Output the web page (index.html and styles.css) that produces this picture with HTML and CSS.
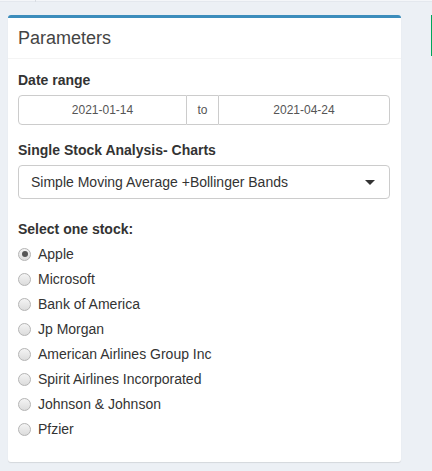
FILE: index.html
```html
<!DOCTYPE html>
<html>
<head>
<meta charset="utf-8">
<link rel="stylesheet" href="styles.css">
</head>
<body>
<div class="topbar"><span class="tick"></span></div>
<div class="content">
  <section class="box">
    <div class="box-header"><h3 class="box-title">Parameters</h3></div>
    <div class="box-body">
      <div class="form-group">
        <label class="control-label">Date range</label>
        <div class="daterange">
          <input class="date-input" type="text" value="2021-01-14">
          <span class="addon">to</span>
          <input class="date-input" type="text" value="2021-04-24">
        </div>
      </div>
      <div class="form-group select-group">
        <label class="control-label">Single Stock Analysis- Charts</label>
        <div class="select">
          <span class="select-text">Simple Moving Average +Bollinger Bands</span>
          <span class="caret"></span>
        </div>
      </div>
      <div class="form-group radio-group">
        <label class="control-label">Select one stock:</label>
        <div class="options">
          <label class="radio"><input type="radio" name="stock" checked><span>Apple</span></label>
          <label class="radio"><input type="radio" name="stock"><span>Microsoft</span></label>
          <label class="radio"><input type="radio" name="stock"><span>Bank of America</span></label>
          <label class="radio"><input type="radio" name="stock"><span>Jp Morgan</span></label>
          <label class="radio"><input type="radio" name="stock"><span>American Airlines Group Inc</span></label>
          <label class="radio"><input type="radio" name="stock"><span>Spirit Airlines Incorporated</span></label>
          <label class="radio"><input type="radio" name="stock"><span>Johnson &amp; Johnson</span></label>
          <label class="radio"><input type="radio" name="stock"><span>Pfzier</span></label>
        </div>
      </div>
    </div>
  </section>
  <div class="side-box"></div>
</div>
</body>
</html>
```

FILE: styles.css
```css
* { box-sizing: border-box; }
html, body {
  margin: 0;
  padding: 0;
  background: #ecf0f5;
  font-family: "Liberation Sans", Arial, Helvetica, sans-serif;
  font-size: 14px;
  color: #333;
  overflow: hidden;
  width: 432px;
  height: 471px;
}
.topbar {
  height: 2px;
  background: #f4f6f9;
  border-bottom: 1px solid #e4e8ee;
  position: relative;
}
.tick {
  position: absolute;
  left: 35px;
  top: 0;
  width: 1px;
  height: 2px;
  background: #d8dce2;
}
.content {
  display: flex;
  align-items: flex-start;
  padding: 13px 0 0 8px;
  gap: 30px;
}
.box {
  flex: 0 0 393px;
  width: 393px;
  background: #fff;
  border-top: 3px solid #3c8dbc;
  border-radius: 3px;
  box-shadow: 0 1px 1px rgba(0,0,0,0.1);
  height: 447px;
}
.box-header {
  padding: 10px;
  border-bottom: 1px solid #f4f4f4;
  height: 41px;
}
.box-title {
  margin: 0;
  font-size: 18px;
  font-weight: normal;
  line-height: 20px;
  color: #444;
}
.box-body {
  padding: 11px 11px 10px 10px;
}
.form-group {
  margin-bottom: 15px;
}
.control-label {
  display: block;
  font-weight: bold;
  font-size: 14px;
  line-height: 20px;
  margin-bottom: 5px;
  color: #333;
}
.daterange {
  display: flex;
  height: 30px;
}
.date-input {
  flex: 1;
  min-width: 0;
  height: 30px;
  border: 1px solid #ccc;
  font-family: inherit;
  font-size: 12px;
  color: #555;
  text-align: center;
  padding: 5px 10px;
  outline: none;
  background: #fff;
}
.date-input:first-child {
  border-radius: 4px 0 0 4px;
  flex: 0 0 169px;
}
.date-input:last-child {
  border-radius: 0 4px 4px 0;
}
.addon {
  flex: 0 0 31px;
  display: flex;
  align-items: center;
  justify-content: center;
  font-size: 12px;
  color: #555;
  border-top: 1px solid #ccc;
  border-bottom: 1px solid #ccc;
  background: #fff;
}
.select-group {
  margin-bottom: 20px;
}
.select {
  height: 34px;
  border: 1px solid #ccc;
  border-radius: 4px;
  display: flex;
  align-items: center;
  justify-content: space-between;
  padding: 0 14px 0 12px;
  font-size: 14px;
  color: #333;
}
.caret {
  width: 0;
  height: 0;
  border-left: 5px solid transparent;
  border-right: 5px solid transparent;
  border-top: 5px solid #333;
}
.options {
  display: flex;
  flex-direction: column;
  gap: 5px;
}
.radio {
  display: flex;
  align-items: center;
  height: 20px;
  font-size: 14px;
  color: #333;
  cursor: pointer;
}
.radio input {
  -webkit-appearance: none;
  appearance: none;
  width: 13px;
  height: 13px;
  margin: 0 7px 0 0;
  border: 1px solid #b4b4b4;
  border-radius: 50%;
  background: linear-gradient(#f4f4f4, #dcdcdc);
  position: relative;
}
.radio input:checked::after {
  content: "";
  position: absolute;
  left: 2.5px;
  top: 2.5px;
  width: 6px;
  height: 6px;
  border-radius: 50%;
  background: #555;
}
.side-box {
  flex: 0 0 1px;
  width: 1px;
  height: 41px;
  background: #00a65a;
}
```
